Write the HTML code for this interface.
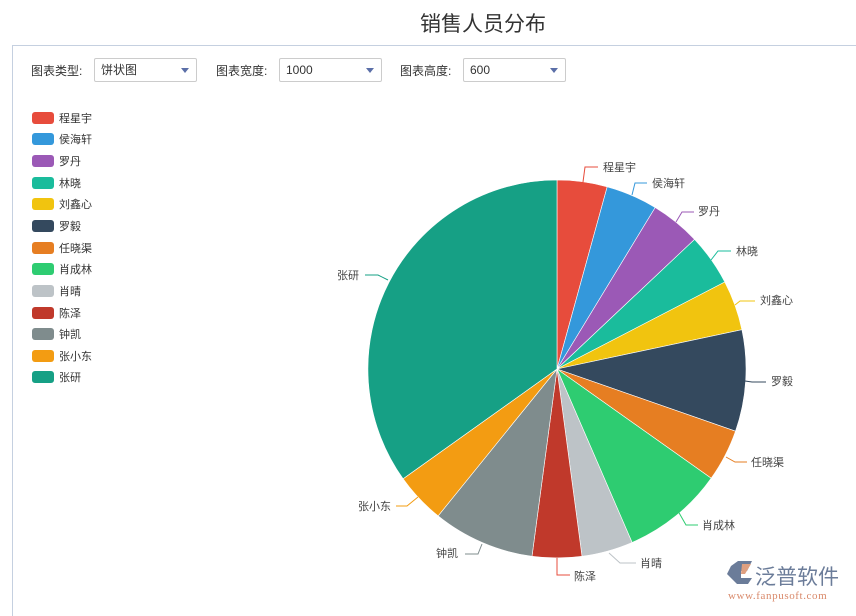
<!DOCTYPE html>
<html><head><meta charset="utf-8"><style>
body{margin:0;width:856px;height:609px;background:#fff;font-family:"Liberation Sans","Noto Sans CJK SC",sans-serif;position:relative;overflow:hidden;color:#333}
.title{position:absolute;left:0;width:856px;top:8px;text-align:center;font-size:21px;color:#333;padding-left:110px;box-sizing:border-box}
.panel{position:absolute;left:12px;top:45px;width:850px;height:570px;border-top:1px solid #c5d0e0;border-left:1px solid #c5d0e0}
.lbl{position:absolute;top:62px;font-size:12px}
.sel{position:absolute;top:58px;height:23px;border:1px solid #ccc;border-radius:2px;font-size:12px;line-height:23px;padding-left:6px;box-sizing:border-box;height:24px}
.sel:after{content:"";position:absolute;right:7px;top:9px;border-left:4px solid transparent;border-right:4px solid transparent;border-top:5px solid #5b6fa8}
.lg{position:absolute;left:32px;font-size:11px}
.lg i{position:absolute;left:0;top:0;width:22px;height:12px;border-radius:3px}
.lg span{position:absolute;left:27px;top:-2px;white-space:nowrap}
</style></head><body>
<div class="title">销售人员分布</div>
<div class="panel"></div>
<div class="lbl" style="left:31px">图表类型:</div>
<div class="sel" style="left:94px;width:103px">饼状图</div>
<div class="lbl" style="left:216px">图表宽度:</div>
<div class="sel" style="left:279px;width:103px">1000</div>
<div class="lbl" style="left:400px">图表高度:</div>
<div class="sel" style="left:463px;width:103px">600</div>

<div class="lg" style="top:112px"><i style="background:#e74c3c"></i><span>程星宇</span></div>
<div class="lg" style="top:133px"><i style="background:#3498db"></i><span>侯海轩</span></div>
<div class="lg" style="top:155px"><i style="background:#9b59b6"></i><span>罗丹</span></div>
<div class="lg" style="top:177px"><i style="background:#1abc9c"></i><span>林晓</span></div>
<div class="lg" style="top:198px"><i style="background:#f1c40f"></i><span>刘鑫心</span></div>
<div class="lg" style="top:220px"><i style="background:#34495e"></i><span>罗毅</span></div>
<div class="lg" style="top:242px"><i style="background:#e67e22"></i><span>任晓渠</span></div>
<div class="lg" style="top:263px"><i style="background:#2ecc71"></i><span>肖成林</span></div>
<div class="lg" style="top:285px"><i style="background:#bdc3c7"></i><span>肖晴</span></div>
<div class="lg" style="top:307px"><i style="background:#c0392b"></i><span>陈泽</span></div>
<div class="lg" style="top:328px"><i style="background:#7f8c8d"></i><span>钟凯</span></div>
<div class="lg" style="top:350px"><i style="background:#f39c12"></i><span>张小东</span></div>
<div class="lg" style="top:371px"><i style="background:#16a085"></i><span>张研</span></div>

<svg width="856" height="609" style="position:absolute;left:0;top:0" font-family="Liberation Sans, Noto Sans CJK SC, sans-serif" font-size="11" fill="#444">
<g stroke="#fff" stroke-width="0.6">
<path d="M557 369L557 180A189 189 0 0 1 607.2 186.8Z" fill="#e74c3c"/>
<path d="M557 369L607.2 186.8A189 189 0 0 1 655.2 207.5Z" fill="#3498db"/>
<path d="M557 369L655.2 207.5A189 189 0 0 1 694.6 239.4Z" fill="#9b59b6"/>
<path d="M557 369L694.6 239.4A189 189 0 0 1 724.8 282Z" fill="#1abc9c"/>
<path d="M557 369L724.8 282A189 189 0 0 1 741.9 329.7Z" fill="#f1c40f"/>
<path d="M557 369L741.9 329.7A189 189 0 0 1 735.5 431.2Z" fill="#34495e"/>
<path d="M557 369L735.5 431.2A189 189 0 0 1 711.2 478.2Z" fill="#e67e22"/>
<path d="M557 369L711.2 478.2A189 189 0 0 1 632.1 542.5Z" fill="#2ecc71"/>
<path d="M557 369L632.1 542.5A189 189 0 0 1 582 556.3Z" fill="#bdc3c7"/>
<path d="M557 369L582 556.3A189 189 0 0 1 532 556.3Z" fill="#c0392b"/>
<path d="M557 369L532 556.3A189 189 0 0 1 438.1 515.9Z" fill="#7f8c8d"/>
<path d="M557 369L438.1 515.9A189 189 0 0 1 403.1 478.8Z" fill="#f39c12"/>
<path d="M557 369L403.1 478.8A189 189 0 0 1 557 180Z" fill="#16a085"/>
</g>
<g fill="none" stroke-width="1">
<path d="M583 182L585 167L598 167" stroke="#e74c3c"/>
<path d="M632 195L635 183L647 183" stroke="#3498db"/>
<path d="M676 222L682 212L694 212" stroke="#9b59b6"/>
<path d="M711 260L718 251L731 251" stroke="#1abc9c"/>
<path d="M735 305L740 301L755 301" stroke="#f1c40f"/>
<path d="M745 381L752 382L766 382" stroke="#34495e"/>
<path d="M726 457L735 462L747 462" stroke="#e67e22"/>
<path d="M678 511L686 525L698 525" stroke="#2ecc71"/>
<path d="M609 553L620 563L636 563" stroke="#bdc3c7"/>
<path d="M557 558L557 575L570 575" stroke="#e74c3c"/>
<path d="M482 544L478 554L465 554" stroke="#7f8c8d"/>
<path d="M418 497L407 506L396 506" stroke="#f39c12"/>
<path d="M388 280L378 275L365 275" stroke="#16a085"/>
</g>
<text x="603" y="171">程星宇</text>
<text x="652" y="187">侯海轩</text>
<text x="698" y="215">罗丹</text>
<text x="736" y="255">林晓</text>
<text x="760" y="304">刘鑫心</text>
<text x="771" y="385">罗毅</text>
<text x="751" y="466">任晓渠</text>
<text x="702" y="529">肖成林</text>
<text x="640" y="567">肖晴</text>
<text x="574" y="580">陈泽</text>
<text x="436" y="557">钟凯</text>
<text x="358" y="510">张小东</text>
<text x="337" y="279">张研</text>
<path d="M731 566L738 561L752 561L747 571L741 571L741 578L752 578L748 584L737 584L727 574Z" fill="#6b7c99"/>
<path d="M742 564L751 564L745 574L741 574Z" fill="#e0a080"/>
<text x="755" y="584" font-size="21" fill="#6b7c99">泛普软件</text>
<text x="728" y="599" font-size="11" fill="#d9896a" letter-spacing="0.6" font-family="Liberation Serif, serif">www.fanpusoft.com</text>
</svg>
</body></html>
